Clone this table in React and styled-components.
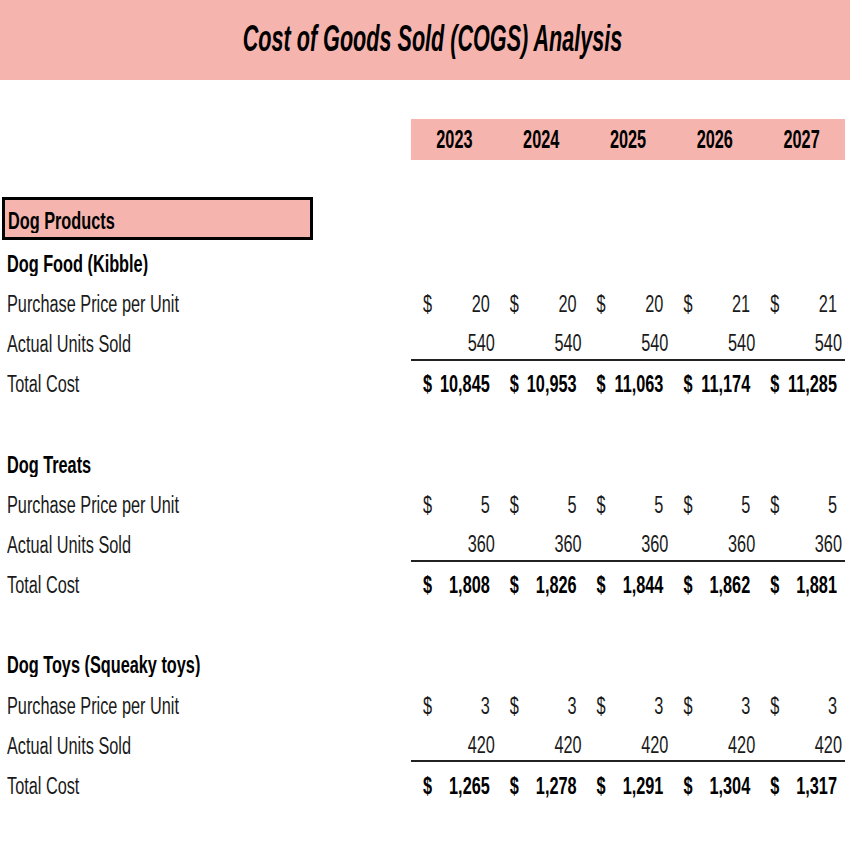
import React from "react";
import styled, { createGlobalStyle } from "styled-components";

const GlobalStyle = createGlobalStyle`
  html, body {
    margin: 0;
    padding: 0;
    background: #ffffff;
  }
  body {
    font-family: "Liberation Sans", Arial, sans-serif;
    color: #111111;
  }
`;

const PINK = "#f5b5ae";
const COLS = "411px repeat(5, 86.8px)";

const Page = styled.div`
  width: 850px;
  height: 850px;
  overflow: hidden;
`;

const Banner = styled.header`
  height: 80px;
  background: ${PINK};
  display: flex;
  align-items: center;
  justify-content: center;
  padding: 0 0 3px 15px;
  box-sizing: border-box;
`;

const Title = styled.h1`
  margin: 0;
  font-size: 21.6px;
  font-weight: 700;
  font-style: italic;
  color: #000;
`;

// the sheet text is tall and narrow: set the width by font-size, then stretch it up
const Tall = styled.span`
  display: inline-block;
  white-space: nowrap;
  transform: scaleY(${({ $sy }) => $sy || 1.47});
  transform-origin: center;
`;

const YearRow = styled.div`
  display: grid;
  grid-template-columns: ${COLS};
  margin-top: 39px;
  height: 41px;
`;

const YearBand = styled.div`
  grid-column: 2 / span 5;
  display: grid;
  grid-template-columns: repeat(5, 86.8px);
  background: ${PINK};
`;

const Year = styled.div`
  display: flex;
  align-items: center;
  justify-content: center;
  font-size: 16.3px;
  font-weight: 700;
  color: #000;
`;

const Table = styled.div`
  margin-top: 37px;
`;

const Row = styled.div`
  display: grid;
  grid-template-columns: ${COLS};
  height: ${({ $h }) => $h || "40.2px"};
  box-sizing: border-box;
`;

const CategoryBox = styled.div`
  border: 3px solid #000;
  background: ${PINK};
  margin-left: 2px;
  width: 311px;
  box-sizing: border-box;
  display: flex;
  align-items: center;
  padding: 3px 0 0 3px;
  font-size: 16.3px;
  font-weight: 700;
  color: #000;
`;

const Label = styled.div`
  display: flex;
  align-items: center;
  padding: 6px 0 0 7px;
  font-size: 16.3px;
  font-weight: ${({ $bold }) => ($bold ? 700 : 400)};
  color: ${({ $bold }) => ($bold ? "#000" : "#1a1a1a")};
`;

const Money = styled.div`
  display: flex;
  align-items: center;
  justify-content: space-between;
  padding: 6px 8px 0 12px;
  font-size: 16.3px;
  font-weight: ${({ $bold }) => ($bold ? 700 : 400)};
  color: ${({ $bold }) => ($bold ? "#000" : "#1a1a1a")};
`;

const Units = styled.div`
  display: flex;
  align-items: center;
  justify-content: flex-end;
  padding: 6px 3px 0 0;
  font-size: 16.3px;
  color: #1a1a1a;
  border-bottom: 2px solid #222;
  box-sizing: border-box;
`;

const years = [2023, 2024, 2025, 2026, 2027];

const sections = [
  {
    name: "Dog Food (Kibble)",
    price: [20, 20, 20, 21, 21],
    units: 540,
    total: [10845, 10953, 11063, 11174, 11285],
  },
  {
    name: "Dog Treats",
    price: [5, 5, 5, 5, 5],
    units: 360,
    total: [1808, 1826, 1844, 1862, 1881],
  },
  {
    name: "Dog Toys (Squeaky toys)",
    price: [3, 3, 3, 3, 3],
    units: 420,
    total: [1265, 1278, 1291, 1304, 1317],
  },
];

const fmt = (n) => n.toLocaleString("en-US");

const MoneyCells = ({ values, bold }) =>
  values.map((v, i) => (
    <Money key={i} $bold={bold}>
      <Tall>$</Tall>
      <Tall>{fmt(v)}</Tall>
    </Money>
  ));

const Section = ({ data, last }) => (
  <>
    <Row>
      <Label $bold>
        <Tall>{data.name}</Tall>
      </Label>
    </Row>
    <Row>
      <Label>
        <Tall>Purchase Price per Unit</Tall>
      </Label>
      <MoneyCells values={data.price} />
    </Row>
    <Row>
      <Label>
        <Tall>Actual Units Sold</Tall>
      </Label>
      {years.map((y) => (
        <Units key={y}>
          <Tall>{fmt(data.units)}</Tall>
        </Units>
      ))}
    </Row>
    <Row>
      <Label>
        <Tall>Total Cost</Tall>
      </Label>
      <MoneyCells values={data.total} bold />
    </Row>
    {!last && <Row />}
  </>
);

const App = () => {
  return (
    <Page>
      <GlobalStyle />
      <Banner>
        <Title>
          <Tall $sy={1.667}>Cost of Goods Sold (COGS) Analysis</Tall>
        </Title>
      </Banner>
      <YearRow>
        <div />
        <YearBand>
          {years.map((y) => (
            <Year key={y}>
              <Tall $sy={1.54}>{y}</Tall>
            </Year>
          ))}
        </YearBand>
      </YearRow>
      <Table>
        <Row $h="43px">
          <CategoryBox>
            <Tall>Dog Products</Tall>
          </CategoryBox>
        </Row>
        {sections.map((s, i) => (
          <Section key={s.name} data={s} last={i === sections.length - 1} />
        ))}
      </Table>
    </Page>
  );
};

export default App;
